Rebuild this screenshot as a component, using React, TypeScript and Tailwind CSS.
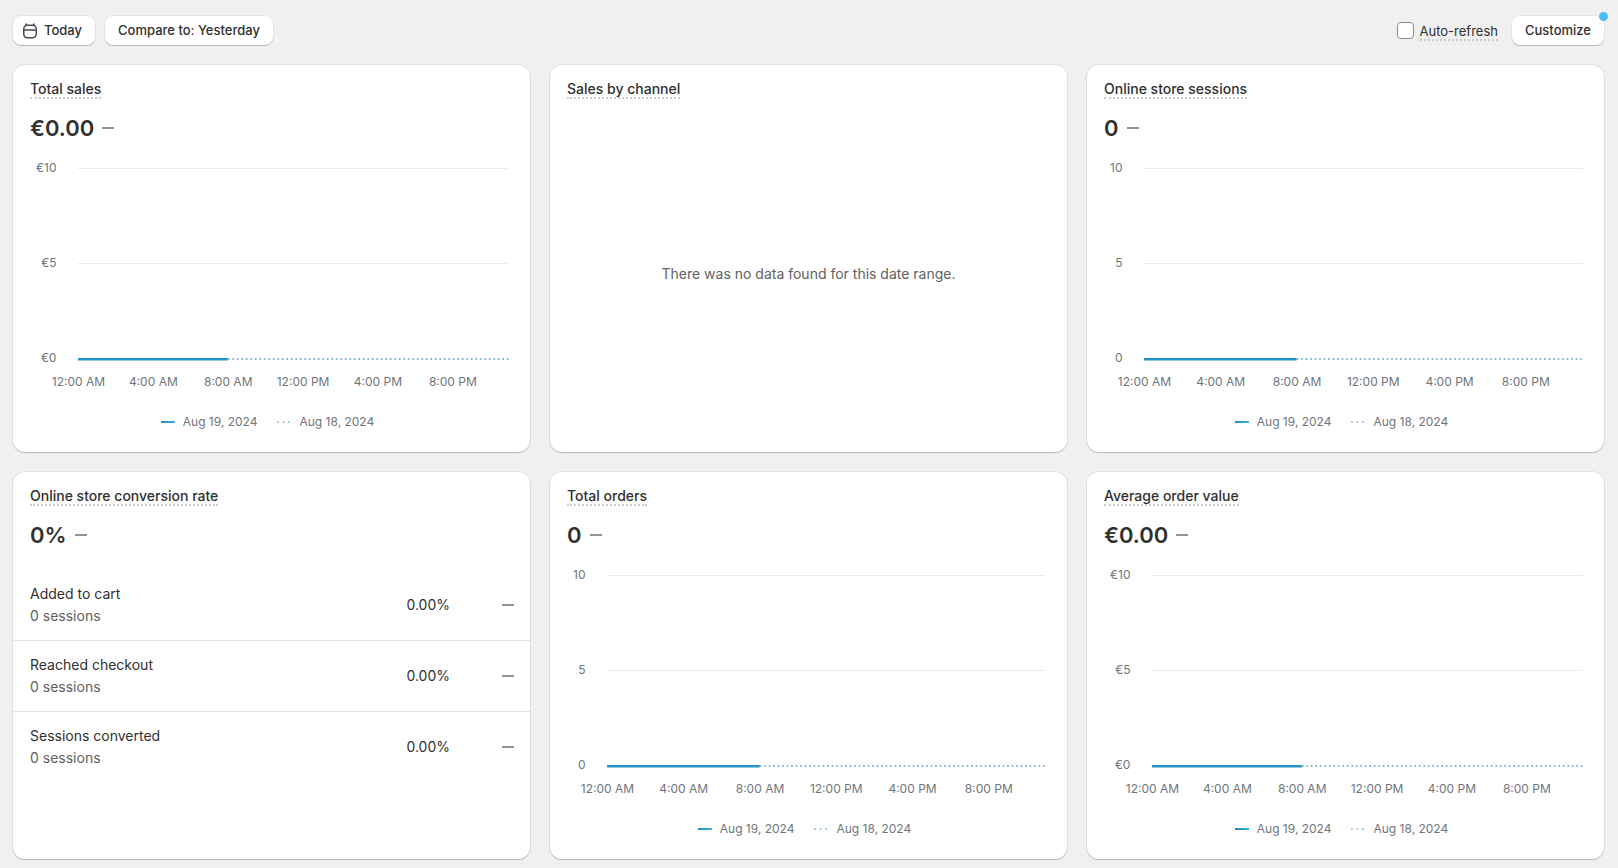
type Metric = {
  title: string;
  value: string;
  ticks: string[];
};

const times = ['12:00 AM', '4:00 AM', '8:00 AM', '12:00 PM', '4:00 PM', '8:00 PM'];

const steps = [
  { label: 'Added to cart', sessions: '0 sessions', rate: '0.00%' },
  { label: 'Reached checkout', sessions: '0 sessions', rate: '0.00%' },
  { label: 'Sessions converted', sessions: '0 sessions', rate: '0.00%' },
];

const euros = ['€10', '€5', '€0'];
const counts = ['10', '5', '0'];

function Dash() {
  return <span className="h-[2px] w-3 shrink-0 bg-[#949494]" />;
}

function CalendarIcon() {
  return (
    <svg width="16" height="16" viewBox="0 0 16 16" fill="none" stroke="#4a4a4a" strokeWidth="1.5" strokeLinecap="round" aria-hidden="true">
      <rect x="1.75" y="2.25" width="12.5" height="12.5" rx="3.75" />
      <path d="M2 7h12M4.25 1v1.25M11.75 1v1.25" />
    </svg>
  );
}

function Card({ title, children }: { title: string; children: React.ReactNode }) {
  return (
    <section className="flex min-h-[387px] flex-col rounded-xl bg-white pt-4 shadow-[0_1px_1px_rgba(0,0,0,0.18),0_0_0_1px_rgba(0,0,0,0.06)]">
      <h2 className="flex px-[17px] text-sm font-medium text-[#303030]">
        <span className="border-b-2 border-dotted border-[#cccccc] leading-4">{title}</span>
      </h2>
      {children}
    </section>
  );
}

function Headline({ value }: { value: string }) {
  return (
    <p className="mt-[15px] flex items-center gap-2 px-[17px] text-[22px] leading-7 font-semibold text-[#303030]">
      {value}
      <Dash />
    </p>
  );
}

function Legend() {
  return (
    <div className="mt-6 flex justify-center gap-5 pr-1 text-xs leading-4 text-[#70757c]">
      <span className="flex items-center gap-2">
        <span className="h-[2px] w-3.5 bg-linear-to-r from-[#2b87b0] to-[#35b5e0]" />
        Aug 19, 2024
      </span>
      <span className="flex items-center gap-2">
        <svg width="14" height="2" aria-hidden="true">
          <line x1="1" y1="1" x2="14" y2="1" stroke="#8fc3d3" strokeWidth="2" strokeLinecap="round" strokeDasharray="0 5.5" />
        </svg>
        Aug 18, 2024
      </span>
    </div>
  );
}

function Chart({ ticks }: { ticks: string[] }) {
  return (
    <div className="mt-[18px] pr-[21px] pl-[17px]">
      <div className="flex gap-[22px]">
        <div className="flex h-[206px] shrink-0 flex-col justify-between pl-1.5 text-right text-xs leading-4 text-[#70757c]">
          {ticks.map((t) => (
            <span key={t}>{t}</span>
          ))}
        </div>
        <div className="min-w-0 flex-1 pt-2">
          <svg className="block h-[192px] w-full overflow-visible" aria-hidden="true">
            <rect x="0" y="0" width="100%" height="1" fill="#ebebeb" />
            <rect x="0" y="95" width="100%" height="1" fill="#ebebeb" />
            <line x1="35%" y1="191" x2="100%" y2="191" stroke="#74b3ca" strokeWidth="2" strokeLinecap="round" strokeDasharray="0 4.5" />
            <rect x="0" y="190" width="34.8%" height="2.5" fill="#2596c4" />
          </svg>
          <div className="mt-3.5 flex w-20/23 justify-between text-xs leading-4 text-[#70757c]">
            {times.map((t) => (
              <span key={t} className="flex w-0 justify-center whitespace-nowrap">
                {t}
              </span>
            ))}
          </div>
        </div>
      </div>
      <Legend />
    </div>
  );
}

function ChartCard({ title, value, ticks }: Metric) {
  return (
    <Card title={title}>
      <Headline value={value} />
      <Chart ticks={ticks} />
    </Card>
  );
}

const buttonClass =
  'flex h-[29px] items-center gap-1.5 rounded-lg bg-white text-[13px] font-medium text-[#303030] shadow-[0_1px_0_rgba(0,0,0,0.2),0_0_0_1px_rgba(0,0,0,0.05)]';

export default function App() {
  return (
    <div className="min-h-screen bg-[#f0f0f0] pt-4 pr-3.5 pb-2 pl-[13px] font-[Inter,sans-serif]">
      <header className="flex items-center justify-between">
        <div className="flex gap-2.5">
          <button className={`${buttonClass} pr-[13px] pl-[9px]`}>
            <CalendarIcon />
            Today
          </button>
          <button className={`${buttonClass} px-[13px]`}>Compare to: Yesterday</button>
        </div>
        <div className="flex items-center gap-3.5">
          <label className="flex items-center gap-1.5 text-[13px] text-[#303030]">
            <input type="checkbox" className="size-[17px] appearance-none rounded-sm border border-[#8a8a8a] bg-white" />
            <span className="border-b-2 border-dotted border-[#cccccc] pt-0.5 leading-4">Auto-refresh</span>
          </label>
          <div className="relative">
            <button className={`${buttonClass} px-[13px]`}>Customize</button>
            <span className="absolute -top-1 -right-1 size-[9px] rounded-full bg-[#4cbcf4]" />
          </div>
        </div>
      </header>

      <main className="mt-5 grid grid-cols-3 gap-5">
        <ChartCard title="Total sales" value="€0.00" ticks={euros} />
        <Card title="Sales by channel">
          <p className="flex flex-1 items-center justify-center pb-1 text-sm text-[#616161]">
            There was no data found for this date range.
          </p>
        </Card>
        <ChartCard title="Online store sessions" value="0" ticks={counts} />

        <Card title="Online store conversion rate">
          <Headline value="0%" />
          <ul className="mt-[21px] divide-y divide-[#e3e3e3] text-sm leading-[22px]">
            {steps.map((s) => (
              <li key={s.label} className="flex items-center py-[13px] pr-4 pl-[17px]">
                <div className="flex-1">
                  <p className="text-[#303030]">{s.label}</p>
                  <p className="text-[#616161]">{s.sessions}</p>
                </div>
                <span className="mr-13 text-[#303030]">{s.rate}</span>
                <Dash />
              </li>
            ))}
          </ul>
        </Card>
        <ChartCard title="Total orders" value="0" ticks={counts} />
        <ChartCard title="Average order value" value="€0.00" ticks={euros} />
      </main>
    </div>
  );
}
